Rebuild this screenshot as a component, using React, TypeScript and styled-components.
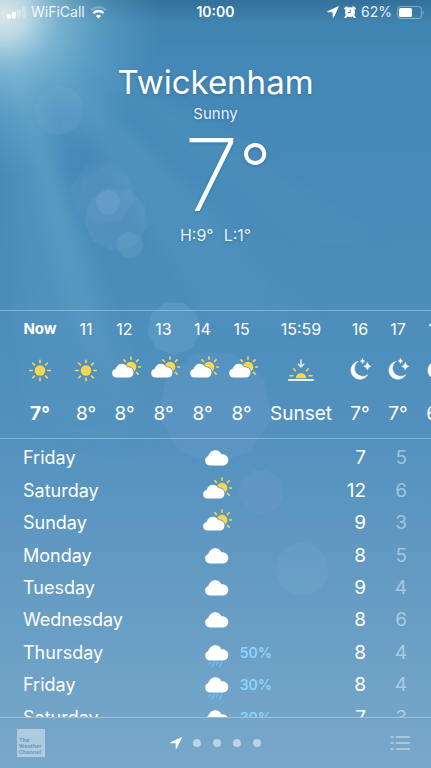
import React, { useId } from "react";
import styled, { createGlobalStyle } from "styled-components";

const GlobalStyle = createGlobalStyle`
  * { box-sizing: border-box; }
  body {
    margin: 0;
    color: #fff;
    font-family: Inter, "Liberation Sans", sans-serif;
    -webkit-font-smoothing: antialiased;
  }
  button { font: inherit; color: inherit; background: none; border: 0; padding: 0; cursor: pointer; }
`;

const SUN = "#fbd84b";
const LINE = "rgba(255, 255, 255, 0.3)";

const Screen = styled.div`
  position: relative;
  isolation: isolate;
  display: flex;
  flex-direction: column;
  height: 100vh;
  overflow: hidden;
  background: linear-gradient(#33709a 0%, #4084b0 3%, #4388b7 8%, #4b8dbb 38%, #5391be 57%, #679dc4 79%, #78a8ca 100%);
`;

const Sky = styled.svg`
  position: absolute;
  inset: 0;
  width: 100%;
  height: 100%;
  z-index: -1;
`;

const StatusBar = styled.div`
  display: grid;
  grid-template-columns: 1fr auto 1fr;
  align-items: center;
  height: 24px;
  flex: none;
  padding: 0 7px;
  font-size: 14px;
  line-height: 24px;
  color: rgba(255, 255, 255, 0.9);
`;

const StatusGroup = styled.div<{ $end?: boolean }>`
  display: flex;
  align-items: center;
  gap: 5px;
  justify-content: ${(p) => (p.$end ? "flex-end" : "flex-start")};
`;

const Clock = styled.time`
  font-weight: 600;
  color: #fff;
`;

const Header = styled.header`
  display: flex;
  flex-direction: column;
  align-items: center;
  flex: none;
  height: 286px;
  padding-top: 36px;
  text-shadow: 0 1px 3px rgba(0, 40, 80, 0.25);
`;

const City = styled.h1`
  margin: 0;
  font-size: 33px;
  font-weight: 400;
  line-height: 44px;
`;

const Condition = styled.p`
  margin: 0;
  font-size: 15px;
  line-height: 20px;
  color: rgba(255, 255, 255, 0.9);
`;

const Current = styled.div`
  position: relative;
  padding-right: 8px;
  font-size: 100px;
  font-weight: 200;
  line-height: 102px;
`;

const Degree = styled.span`
  position: absolute;
  left: 100%;
  top: 0;
  margin-left: -8px;
  font-size: 70px;
  font-weight: 300;
  line-height: 90px;
`;

const Range = styled.p`
  display: flex;
  gap: 10px;
  margin: 0;
  font-size: 16px;
  line-height: 18px;
  color: rgba(255, 255, 255, 0.9);
`;

const Hourly = styled.ul`
  display: flex;
  flex: none;
  height: 129px;
  margin: 0;
  padding: 0 0 0 13px;
  list-style: none;
  overflow-x: auto;
  overflow-y: hidden;
  scrollbar-width: none;
  border-top: 1px solid ${LINE};
  border-bottom: 1px solid ${LINE};
`;

const Hour = styled.li<{ $width: number; $bold?: boolean }>`
  display: flex;
  flex-direction: column;
  align-items: center;
  flex: 0 0 ${(p) => p.$width}px;
  padding-top: 6px;
  white-space: nowrap;
  font-size: ${(p) => (p.$bold ? 15 : 16)}px;
  font-weight: ${(p) => (p.$bold ? 700 : 400)};
`;

const HourTime = styled.span`
  line-height: 24px;
  margin-bottom: 14px;
`;

const HourValue = styled.span`
  margin-top: 16px;
  font-size: 19px;
  line-height: 26px;
`;

const Daily = styled.main`
  flex: 1;
  min-height: 0;
  padding: 3px 24px 0 23px;
  overflow-y: auto;
  scrollbar-width: none;
`;

const DayTable = styled.table`
  width: 100%;
  height: 292px;
  table-layout: fixed;
  border-collapse: collapse;
  line-height: 24px;
`;

const DayName = styled.th`
  width: 46%;
  padding: 0;
  text-align: left;
  font-size: 18px;
  font-weight: 400;
`;

const IconCell = styled.td`
  width: 32px;
  padding: 0;
  line-height: 0;
`;

const Precip = styled.td`
  padding: 0 0 0 8px;
  font-size: 14px;
  font-weight: 600;
  color: #8fd4fa;
`;

const Temp = styled.td<{ $low?: boolean }>`
  width: ${(p) => (p.$low ? 41 : 60)}px;
  padding: 0;
  text-align: right;
  font-size: 19px;
  color: ${(p) => (p.$low ? "rgba(255, 255, 255, 0.45)" : "#fff")};
`;

const Footer = styled.footer`
  display: grid;
  grid-template-columns: 1fr auto 1fr;
  align-items: center;
  flex: none;
  height: 51px;
  padding: 0 17px;
  border-top: 1px solid ${LINE};
`;

const Provider = styled.a`
  display: flex;
  align-items: flex-end;
  width: 28px;
  height: 28px;
  padding: 0 0 2px 2px;
  background: rgba(255, 255, 255, 0.42);
  color: #6a9dc3;
  font-family: Roboto, sans-serif;
  font-size: 6px;
  line-height: 6px;
  font-weight: 700;
  text-decoration: none;
`;

const Pager = styled.nav`
  display: flex;
`;

const PageButton = styled.button<{ $current?: boolean }>`
  display: flex;
  align-items: center;
  justify-content: center;
  width: ${(p) => (p.$current ? 22 : 20)}px;
  height: 20px;
`;

const Dot = styled.span`
  width: 8px;
  height: 8px;
  border-radius: 50%;
  background: rgba(255, 255, 255, 0.5);
`;

const ListButton = styled.button`
  justify-self: end;
  display: flex;
  margin-right: 4px;
`;

const Arrow = () => (
  <svg width="12" height="12" viewBox="0 0 11 11" aria-hidden="true">
    <path d="M10.300.2.500 4.700c-.6.300-.5 1 .2 1h4.200c.2 0 .3.1.3.3v4.200c0 .7.8.8 1.100.2L10.800.8c.2-.4-.1-.8-.5-.6Z" fill="#fff" />
  </svg>
);

const Signal = () => (
  <svg width="19" height="13" viewBox="0 0 19 13" aria-label="Signal">
    <rect x="0" y="8.500" width="4" height="4" rx="1" fill="#fff" />
    <rect x="5" y="6" width="4" height="6.500" rx="1" fill="#fff" />
    <rect x="10" y="3" width="4" height="9.500" rx="1" fill="#fff" opacity=".25" />
    <rect x="15" y="0.500" width="4" height="12" rx="1" fill="#fff" opacity=".25" />
  </svg>
);

const Wifi = () => (
  <svg width="17" height="13" viewBox="0 0 17 13" fill="none" aria-label="Wi-Fi">
    <path d="M1 4.200a10.800 10.800 0 0 1 15 0" stroke="#fff" strokeWidth="2" opacity=".25" />
    <path d="M3.400 7.100a7.200 7.200 0 0 1 10.200 0" stroke="#fff" strokeWidth="2.300" />
    <path d="M8.500 12.600 5.900 9.900a3.800 3.800 0 0 1 5.200 0Z" fill="#fff" />
  </svg>
);

const Alarm = () => (
  <svg width="12" height="12" viewBox="0 0 12 12" fill="none" aria-label="Alarm">
    <circle cx="6" cy="6.300" r="5" fill="#fff" />
    <path d="M1.200 2.600 2.800 1.200M10.800 2.600 9.200 1.200M2.400 10 1.500 11.100M9.600 10l.9 1.100" stroke="#fff" strokeWidth="2" strokeLinecap="round" />
    <path d="M6.200 3.600v3H3.900" stroke="#3d7aa5" strokeWidth="1" />
  </svg>
);

const Battery = () => (
  <svg width="27" height="13" viewBox="0 0 27 13" fill="none" aria-label="Battery">
    <rect x=".5" y=".5" width="24" height="12" rx="3" stroke="#fff" opacity=".4" />
    <rect x="2" y="2" width="13" height="9" rx="1.500" fill="#fff" />
    <path d="M25.800 4.500c1.200.5 1.200 3.500 0 4Z" fill="#fff" opacity=".4" />
  </svg>
);

const rays = (cx: number, cy: number, from: number, to: number, angles: number[]) =>
  angles
    .map((a) => {
      const c = Math.cos((a * Math.PI) / 180);
      const s = Math.sin((a * Math.PI) / 180);
      return `M${cx + c * from} ${cy - s * from}L${cx + c * to} ${cy - s * to}`;
    })
    .join("");

const ALL = [0, 45, 90, 135, 180, 225, 270, 315];
const CLOUD = "M9.600 22.500A4.900 4.900 0 0 1 8.200 13.100C9.300 9.600 12 7.300 15.300 7.300c2.700 0 5 1.500 6.100 4.100 3.900-.4 6.900 2.200 6.900 5.600 0 3.100-2.400 5.500-5.500 5.500Z";
const SMALL_CLOUD = "M7.600 22.500a4.300 4.300 0 0 1-1-8.500c1-3.300 3.300-5.300 6.200-5.300 2.500 0 4.400 1.300 5.500 3.600 3.600-.3 6.200 1.900 6.200 5.100 0 2.900-2.100 5.100-4.900 5.100Z";

type Kind = "sun" | "partly" | "cloud" | "rain" | "sunset" | "moon";

const WeatherIcon = ({ kind }: { kind: Kind }) => {
  const id = useId();
  return (
    <svg width="32" height="30" viewBox="0 0 32 30" fill="none" strokeLinecap="round" role="img" aria-label={kind}>
      {kind === "sun" && (
        <>
          <circle cx="16" cy="15.500" r="5.200" fill={SUN} />
          <path d={rays(16, 15.5, 7.9, 10.3, ALL)} stroke={SUN} strokeWidth="1.600" />
        </>
      )}
      {kind === "partly" && (
        <>
          <mask id={id} maskUnits="userSpaceOnUse" x="0" y="0" width="36" height="30">
            <rect width="36" height="30" fill="#fff" />
            <path d={SMALL_CLOUD} fill="#000" stroke="#000" strokeWidth="1.600" />
          </mask>
          <g mask={`url(#${id})`}>
            <circle cx="22" cy="12" r="5.300" fill={SUN} />
            <path d={rays(22, 12, 7.7, 10, [0, 45, 90, 135, 315])} stroke={SUN} strokeWidth="1.600" />
          </g>
          <path d={SMALL_CLOUD} fill="#fff" />
        </>
      )}
      {(kind === "cloud" || kind === "rain") && <path d={CLOUD} fill="#fff" />}
      {kind === "rain" && (
        <path d="M10.400 24.400 9.200 26.400M14.300 24.400 12.100 28.800M18 24.400 16.800 26.400M21.900 24.400 19.700 28.800" stroke="#6fbdf5" strokeWidth="1.600" />
      )}
      {kind === "sunset" && (
        <>
          <path d="M16 5v6.500M13.300 9.200 16 11.900l2.700-2.700" stroke="#fff" strokeWidth="1.500" opacity=".85" />
          <path d="M10.800 23.200a5.200 5.200 0 1 1 10.400 0Z" fill={SUN} />
          <path d="M5 20.700h3M24 20.700h3M8.600 13.800l1.900 1.900M23.400 13.800l-1.900 1.900" stroke={SUN} strokeWidth="1.600" />
          <path d="M4 25h24" stroke="#fff" strokeWidth="2" opacity=".85" />
        </>
      )}
      {kind === "moon" && (
        <>
          <path d="M13.700 6.500a9 9 0 1 0 10 13.200A7.400 7.400 0 0 1 13.700 6.500Z" fill="#fff" stroke="#fff" strokeWidth=".5" strokeLinejoin="round" />
          <path d="M18.500 3.700q.5 2 2.300 2.400-1.800.5-2.300 2.400-.5-1.900-2.300-2.400 1.800-.4 2.300-2.400ZM23.300 7.600q.7 3 3.600 3.700-2.900.7-3.600 3.700-.7-3-3.600-3.700 2.900-.7 3.600-3.700Z" fill="#fff" stroke="#fff" strokeWidth=".4" />
        </>
      )}
    </svg>
  );
};

const polygon = (cx: number, cy: number, r: number, sides: number, turn: number) =>
  Array.from({ length: sides }, (_, i) => {
    const a = ((i * 360) / sides + turn) * (Math.PI / 180);
    return `${(cx + r * Math.cos(a)).toFixed(1)},${(cy + r * Math.sin(a)).toFixed(1)}`;
  }).join(" ");

const SkyBackdrop = () => (
  <Sky viewBox="0 0 431 768" preserveAspectRatio="xMinYMin slice" aria-hidden="true">
    <defs>
      <radialGradient id="glow" gradientUnits="userSpaceOnUse" cx="4" cy="14" r="160">
        <stop offset="0" stopColor="#e6eceb" stopOpacity=".95" />
        <stop offset=".15" stopColor="#d3e9f0" stopOpacity=".82" />
        <stop offset=".35" stopColor="#a5d5e6" stopOpacity=".56" />
        <stop offset=".65" stopColor="#82c2dc" stopOpacity=".28" />
        <stop offset="1" stopColor="#7ab8d8" stopOpacity="0" />
      </radialGradient>
      <radialGradient id="ray" gradientUnits="userSpaceOnUse" cx="0" cy="0" r="480">
        <stop offset="0" stopColor="#8accdc" stopOpacity=".1" />
        <stop offset=".35" stopColor="#84c4d6" stopOpacity=".22" />
        <stop offset="1" stopColor="#84c4d6" stopOpacity="0" />
      </radialGradient>
      <filter id="soft" x="-20%" y="-20%" width="140%" height="140%">
        <feGaussianBlur stdDeviation="9" />
      </filter>
    </defs>
    <g fill="url(#ray)" filter="url(#soft)">
      <path d="M0 0 30 420 170 480Z" opacity=".6" />
      <path d="M10 20 62 300 130 420Z" />
      <path d="M10 10 210 320 330 330Z" opacity=".7" />
      <path d="M20 10 300 240 400 250Z" opacity=".4" />
    </g>
    <rect width="431" height="768" fill="url(#glow)" />
    <g fill="#8fb4dc">
      <polygon points={polygon(59, 110, 25, 11, 10)} opacity=".14" />
      <circle cx="67" cy="126" r="6" opacity=".1" />
      <polygon points={polygon(103, 193, 33, 8, 10)} opacity=".08" />
      <polygon points={polygon(106, 195, 29, 7, 10)} opacity=".08" />
      <polygon points={polygon(116, 219, 32, 9, 15)} opacity=".14" />
    </g>
    <g fill="#8dc0da">
      <circle cx="108" cy="202" r="12" opacity=".2" />
      <circle cx="130" cy="245" r="13" opacity=".18" />
      <polygon points={polygon(174, 328, 27, 9, 10)} opacity=".18" />
      <polygon points={polygon(302, 569, 27, 11, 10)} opacity=".12" />
    </g>
    <polygon points={polygon(215, 407, 57, 9, 10)} fill="#82a8da" opacity=".18" />
    <polygon points={polygon(261, 492, 23, 9, 10)} fill="#8fa4d8" opacity=".15" />
  </Sky>
);

type HourData = { time: string; value: string; kind: Kind; width: number; bold?: boolean };

const hours: HourData[] = [
  { time: "Now", value: "7°", kind: "sun", width: 54, bold: true },
  { time: "11", value: "8°", kind: "sun", width: 38 },
  { time: "12", value: "8°", kind: "partly", width: 39 },
  { time: "13", value: "8°", kind: "partly", width: 39 },
  { time: "14", value: "8°", kind: "partly", width: 39 },
  { time: "15", value: "8°", kind: "partly", width: 39 },
  { time: "15:59", value: "Sunset", kind: "sunset", width: 80 },
  { time: "16", value: "7°", kind: "moon", width: 38 },
  { time: "17", value: "7°", kind: "moon", width: 38 },
  { time: "18", value: "6°", kind: "moon", width: 39 },
];

type DayData = { day: string; kind: Kind; chance?: string; high: number; low: number };

const days: DayData[] = [
  { day: "Friday", kind: "cloud", high: 7, low: 5 },
  { day: "Saturday", kind: "partly", high: 12, low: 6 },
  { day: "Sunday", kind: "partly", high: 9, low: 3 },
  { day: "Monday", kind: "cloud", high: 8, low: 5 },
  { day: "Tuesday", kind: "cloud", high: 9, low: 4 },
  { day: "Wednesday", kind: "cloud", high: 8, low: 6 },
  { day: "Thursday", kind: "rain", chance: "50%", high: 8, low: 4 },
  { day: "Friday", kind: "rain", chance: "30%", high: 8, low: 4 },
  { day: "Saturday", kind: "rain", chance: "30%", high: 7, low: 3 },
];

export default function App() {
  return (
    <>
      <GlobalStyle />
      <Screen>
        <SkyBackdrop />
        <StatusBar>
          <StatusGroup>
            <Signal />
            <span>WiFiCall</span>
            <Wifi />
          </StatusGroup>
          <Clock>10:00</Clock>
          <StatusGroup $end>
            <Arrow />
            <Alarm />
            <span>62%</span>
            <Battery />
          </StatusGroup>
        </StatusBar>
        <Header>
          <City>Twickenham</City>
          <Condition>Sunny</Condition>
          <Current>
            7<Degree>°</Degree>
          </Current>
          <Range>
            <span>H:9°</span>
            <span>L:1°</span>
          </Range>
        </Header>
        <Hourly>
          {hours.map((h) => (
            <Hour key={h.time} $width={h.width} $bold={h.bold}>
              <HourTime>{h.time}</HourTime>
              <WeatherIcon kind={h.kind} />
              <HourValue>{h.value}</HourValue>
            </Hour>
          ))}
        </Hourly>
        <Daily>
          <DayTable>
            <tbody>
              {days.map((d, i) => (
                <tr key={i}>
                  <DayName scope="row">{d.day}</DayName>
                  <IconCell>
                    <WeatherIcon kind={d.kind} />
                  </IconCell>
                  <Precip>{d.chance}</Precip>
                  <Temp>{d.high}</Temp>
                  <Temp $low>{d.low}</Temp>
                </tr>
              ))}
            </tbody>
          </DayTable>
        </Daily>
        <Footer>
          <Provider href="#weather-channel">
            The
            <br />
            Weather
            <br />
            Channel
          </Provider>
          <Pager aria-label="Locations">
            <PageButton $current aria-label="Current location">
              <Arrow />
            </PageButton>
            {[2, 3, 4, 5].map((n) => (
              <PageButton key={n} aria-label={`Location ${n}`}>
                <Dot />
              </PageButton>
            ))}
          </Pager>
          <ListButton aria-label="All locations">
            <svg width="20" height="16" viewBox="0 0 20 16" fill="none" aria-hidden="true">
              <path d="M1 2h2M1 8h2M1 14h2M6.500 2h13M6.500 8h13M6.500 14h13" stroke="#fff" strokeWidth="1.500" strokeLinecap="round" opacity=".5" />
            </svg>
          </ListButton>
        </Footer>
      </Screen>
    </>
  );
}
